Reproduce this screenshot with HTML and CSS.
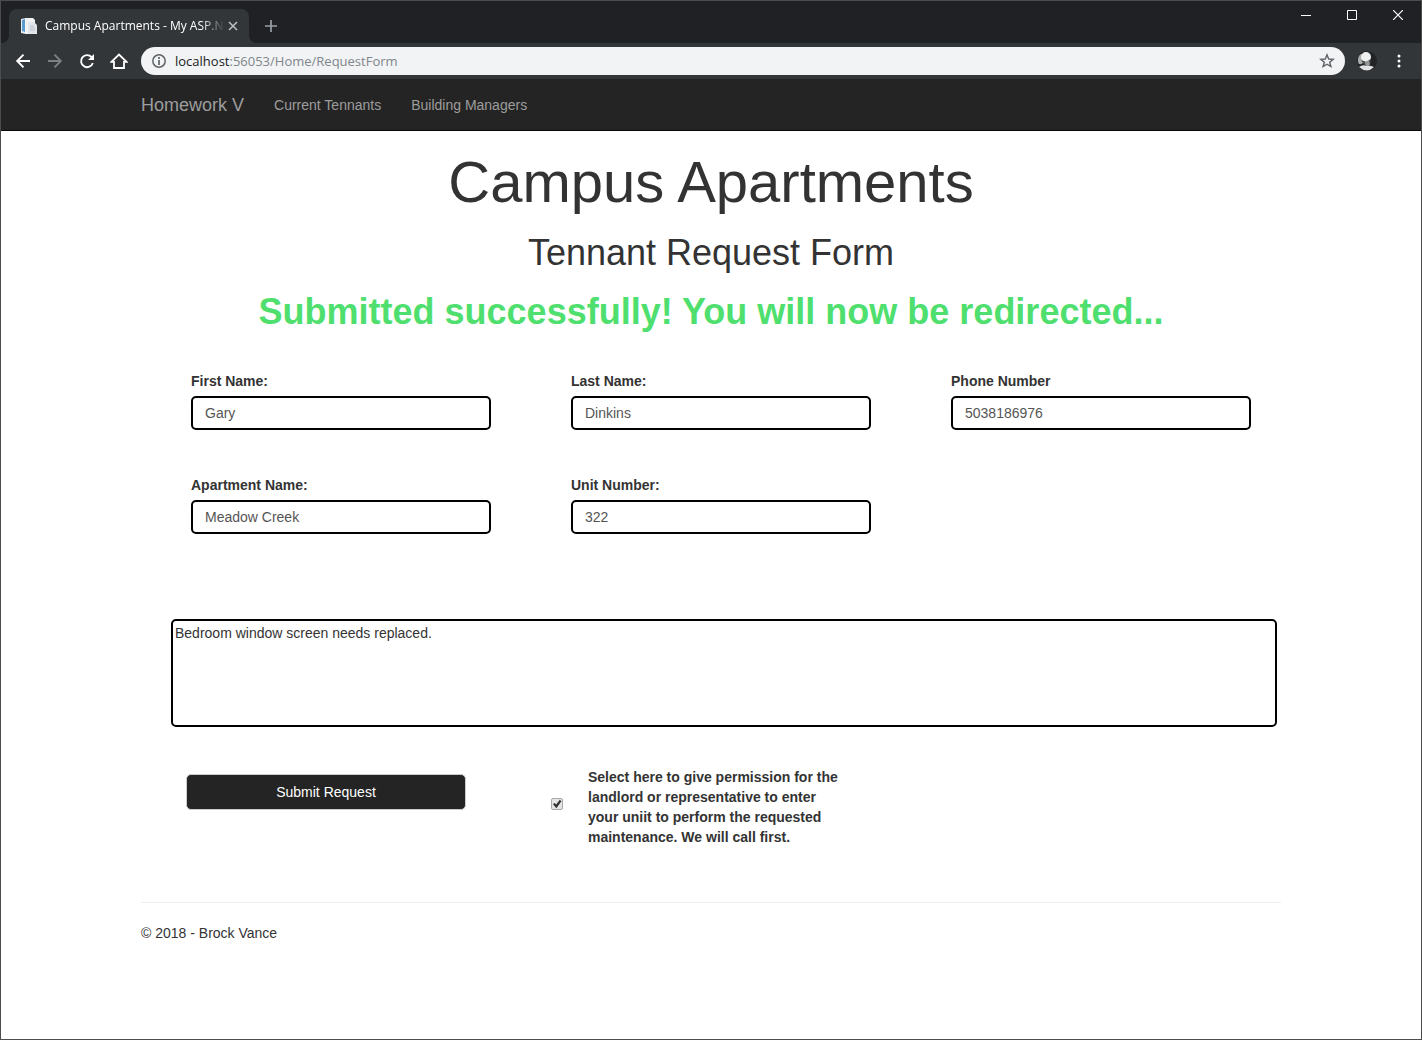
FILE: index.html
```html
<!DOCTYPE html>
<html lang="en">
<head>
<meta charset="utf-8">
<title>Campus Apartments - My ASP.NET Application</title>
<link rel="stylesheet" href="styles.css">
</head>
<body>
<div class="window">
  <div class="tab-strip">
    <div class="tab">
      <svg class="favicon" width="16" height="16" viewBox="0 0 16 16" aria-hidden="true">
        <path d="M0 1l5-1v16l-5-1z" fill="#e8eef4"/>
        <path d="M1 2l3-1v13l-3-1z" fill="#5b9bd0"/>
        <path d="M4 0h8l2 2v14H4z" fill="#f1f3f5"/>
        <path d="M7 4h6l3 3v9H7z" fill="#e2e5e9"/>
        <path d="M9 8h4M9 10h5M9 12h5" stroke="#bcc3cb"/>
      </svg>
      <span class="tab-title">Campus Apartments - My ASP.NE</span>
      <button class="icon-button tab-close" type="button" aria-label="Close tab">
        <svg width="10" height="10" viewBox="0 0 10 10"><path d="M1 1l8 8M9 1l-8 8" stroke="#bdc1c6" stroke-width="1.5"/></svg>
      </button>
    </div>
    <button class="icon-button new-tab" type="button" aria-label="New tab">
      <svg width="12" height="12" viewBox="0 0 12 12"><path d="M6 0v12M0 6h12" stroke="#9aa0a6" stroke-width="1.7"/></svg>
    </button>
    <div class="window-controls">
      <button class="icon-button" type="button" aria-label="Minimize"><svg width="10" height="10" viewBox="0 0 10 10"><path d="M0 5.500h10" stroke="#fff"/></svg></button>
      <button class="icon-button" type="button" aria-label="Maximize"><svg width="10" height="10" viewBox="0 0 10 10"><path d="M.5.5h9v9h-9z" fill="none" stroke="#fff"/></svg></button>
      <button class="icon-button" type="button" aria-label="Close"><svg width="10" height="10" viewBox="0 0 10 10"><path d="M0 0l10 10M10 0L0 10" stroke="#fff" stroke-width="1.2"/></svg></button>
    </div>
  </div>
  <div class="toolbar">
    <button class="icon-button" type="button" aria-label="Back"><svg width="16" height="16" viewBox="0 0 16 16"><path d="M15 8H2.500M8.500 1.700L2.200 8l6.300 6.300" fill="none" stroke="#fff" stroke-width="1.900"/></svg></button>
    <button class="icon-button" type="button" aria-label="Forward"><svg width="16" height="16" viewBox="0 0 16 16"><path d="M1 8h12.500M7.500 1.700L13.800 8l-6.300 6.300" fill="none" stroke="#7d8083" stroke-width="1.900"/></svg></button>
    <button class="icon-button" type="button" aria-label="Reload"><svg width="16" height="16" viewBox="0 0 16 16"><path d="M12.600 4.200A6 6 0 1 0 13.800 10" fill="none" stroke="#fff" stroke-width="1.900"/><path d="M15 1v6H9z" fill="#fff"/></svg></button>
    <button class="icon-button" type="button" aria-label="Home"><svg width="18" height="16" viewBox="0 0 18 16"><path d="M1.500 8.800H4V15h10V8.800h2.500L9 1.600z" fill="none" stroke="#fff" stroke-width="1.800"/></svg></button>
    <div class="address-bar">
      <svg width="14" height="14" viewBox="0 0 14 14" aria-hidden="true"><circle cx="7" cy="7" r="6.200" fill="none" stroke="#5f6368" stroke-width="1.500"/><path d="M7 3v2M7 6v5" stroke="#5f6368" stroke-width="1.700"/></svg>
      <span class="url"><span class="url-host">localhost</span>:56053/Home/RequestForm</span>
      <button class="icon-button star" type="button" aria-label="Bookmark"><svg width="16" height="16" viewBox="0 0 16 16"><path d="M8 1.800l1.700 4.200 4.500.3-3.500 2.900 1.200 4.400L8 11.200l-3.900 2.400 1.200-4.400L1.800 6.300 6.300 6z" fill="none" stroke="#5f6368" stroke-width="1.400"/></svg></button>
    </div>
    <button class="icon-button avatar" type="button" aria-label="Profile">
      <svg width="20" height="20" viewBox="0 0 20 20">
        <circle cx="10" cy="10" r="10" fill="#222324"/>
        <path d="M1 8Q2 3 5 3l1 9q-4 3-5-1z" fill="#a9abad"/>
        <ellipse cx="9" cy="6" rx="5" ry="5" fill="#f0f0f0"/>
        <path d="M4 9l5 2 5-3-1 5-5 2z" fill="#4a4b4c"/>
        <path d="M8 11l4-2 1 5-4 2z" fill="#949698"/>
        <path d="M2 16q4-3 7-1 4-1 8 1-7 7-15 0z" fill="#e1e2e3"/>
      </svg>
    </button>
    <button class="icon-button" type="button" aria-label="Menu"><svg width="4" height="14" viewBox="0 0 4 14"><g fill="#fff"><circle cx="2" cy="2" r="1.500"/><circle cx="2" cy="7" r="1.500"/><circle cx="2" cy="12" r="1.500"/></g></svg></button>
  </div>

  <nav class="navbar">
    <div class="container navbar-inner">
      <a class="brand" href="#">Homework V</a>
      <a class="nav-link" href="#">Current Tennants</a>
      <a class="nav-link" href="#">Building Managers</a>
    </div>
  </nav>

  <main class="container">
    <header class="headings">
      <h1>Campus Apartments</h1>
      <h2>Tennant Request Form</h2>
      <p class="success">Submitted successfully! You will now be redirected...</p>
    </header>
    <form>
      <div class="fields">
        <div class="field"><label for="first">First Name:</label><input class="text-input" id="first" type="text" value="Gary"></div>
        <div class="field"><label for="last">Last Name:</label><input class="text-input" id="last" type="text" value="Dinkins"></div>
        <div class="field"><label for="phone">Phone Number</label><input class="text-input" id="phone" type="text" value="5038186976"></div>
        <div class="field"><label for="apartment">Apartment Name:</label><input class="text-input" id="apartment" type="text" value="Meadow Creek"></div>
        <div class="field"><label for="unit">Unit Number:</label><input class="text-input" id="unit" type="text" value="322"></div>
      </div>
      <div class="request">
        <textarea class="request-text" aria-label="Request">Bedroom window screen needs replaced.</textarea>
      </div>
      <div class="actions">
        <button class="submit" type="button">Submit Request</button>
        <div class="permission">
          <input class="checkbox" id="permission" type="checkbox" checked>
          <label for="permission">Select here to give permission for the landlord or representative to enter your uniit to perform the requested maintenance. We will call first.</label>
        </div>
      </div>
    </form>
    <footer class="footer">© 2018 - Brock Vance</footer>
  </main>
</div>
</body>
</html>
```
FILE: styles.css
```css
* { box-sizing: border-box; }

body {
  margin: 0;
  font: 14px/20px "Liberation Sans", Arial, sans-serif;
  color: #333;
  background: #fff;
}

.window {
  min-height: 100vh;
  border: 1px solid #4c4c4c;
}

.icon-button {
  display: flex;
  align-items: center;
  justify-content: center;
  width: 32px;
  height: 32px;
  padding: 0;
  border: 0;
  background: none;
  flex: none;
}

/* Browser tabs */
.tab-strip {
  display: flex;
  align-items: flex-start;
  height: 42px;
  padding-left: 8px;
  background: #202124;
  font-family: "Open Sans", "Noto Sans", sans-serif;
}

.tab {
  position: relative;
  display: flex;
  align-items: center;
  width: 240px;
  height: 34px;
  margin-top: 8px;
  padding: 0 8px 0 12px;
  border-radius: 8px 8px 0 0;
  background: #323639;
}

.tab::before,
.tab::after {
  content: "";
  position: absolute;
  bottom: 0;
  width: 8px;
  height: 8px;
}

.tab::before {
  left: -8px;
  background: radial-gradient(circle at 0 0, #202124 8px, #323639 8px);
}

.tab::after {
  right: -8px;
  background: radial-gradient(circle at 100% 0, #202124 8px, #323639 8px);
}

.favicon { flex: none; }

.tab-title {
  flex: 1;
  min-width: 0;
  margin-left: 8px;
  white-space: nowrap;
  font-size: 12px;
  color: #fff;
  mask-image: linear-gradient(to left, transparent, #000 24px);
}

.tab-close {
  width: 16px;
  height: 16px;
}

.new-tab {
  width: 28px;
  height: 34px;
  margin: 8px 0 0 8px;
}

.window-controls {
  display: flex;
  margin-left: auto;
}

.window-controls .icon-button {
  width: 46px;
  height: 28px;
}

/* Address bar */
.toolbar {
  display: flex;
  align-items: center;
  height: 36px;
  padding: 0 6px;
  background: #323639;
}

.address-bar {
  display: flex;
  align-items: center;
  flex: 1;
  height: 28px;
  margin: 0 6px;
  padding: 0 2px 0 11px;
  border-radius: 14px;
  background: #f1f3f4;
}

.url {
  margin-left: 9px;
  font: 13px/20px "Open Sans", "Noto Sans", sans-serif;
  color: #80868b;
}

.url-host { color: #202124; }
.star { margin-left: auto; }

/* Site navigation */
.container {
  width: 100%;
  max-width: 1170px;
  margin: 0 auto;
  padding: 0 15px;
}

.navbar {
  background: #242424;
  border-bottom: 1px solid #080808;
}

.navbar-inner {
  display: flex;
  align-items: center;
  gap: 30px;
  height: 51px;
}

.navbar a {
  color: #9d9d9d;
  text-decoration: none;
}

.brand { font-size: 18px; }

/* Headings */
.headings { text-align: center; }

h1, h2, .success {
  margin: 0;
  font-weight: 500;
  font-size: 36px;
  line-height: 40px;
}

h1 {
  padding-top: 18px;
  font-size: 58px;
  line-height: 66px;
}

h2 { margin-top: 18px; }

.success {
  margin-top: 19px;
  font-weight: 700;
  color: #4fdf6e;
}

/* Form */
.fields {
  display: grid;
  grid-template-columns: repeat(3, 1fr);
  row-gap: 45px;
  margin-top: 39px;
}

.field { padding: 0 30px 0 50px; }

.field label {
  display: block;
  margin-bottom: 5px;
}

label { font-weight: 700; }

.text-input {
  display: block;
  width: 100%;
  height: 34px;
  padding: 6px 12px;
  border: 2px solid #000;
  border-radius: 5px;
  font: inherit;
  color: #555;
  background: #fff;
}

.request { padding: 85px 4px 0 30px; }

.request-text {
  display: block;
  width: 100%;
  height: 108px;
  padding: 2px;
  border: 2px solid #000;
  border-radius: 5px;
  font: inherit;
  color: #333;
  resize: none;
}

.actions {
  display: grid;
  grid-template-columns: repeat(3, 1fr);
  margin-top: 40px;
}

.submit {
  height: 36px;
  margin: 7px 55px 0 45px;
  border: 1px solid #ccc;
  border-radius: 5px;
  font: inherit;
  color: #fff;
  background: #242424;
}

.permission {
  display: flex;
  align-items: center;
  gap: 25px;
  padding: 0 60px 0 30px;
}

.checkbox {
  flex: none;
  width: 12px;
  height: 12px;
  margin: 0 0 6px;
  appearance: none;
  border: 1px solid #a9a9a9;
  border-radius: 2px;
  background: #e4e4e4;
}

.checkbox:checked::before {
  content: "";
  display: block;
  width: 10px;
  height: 10px;
  background: #333;
  clip-path: polygon(10% 52%, 26% 40%, 42% 56%, 78% 8%, 94% 22%, 44% 92%);
}

.footer {
  margin-top: 55px;
  padding-top: 20px;
  border-top: 1px solid #eee;
}
```
